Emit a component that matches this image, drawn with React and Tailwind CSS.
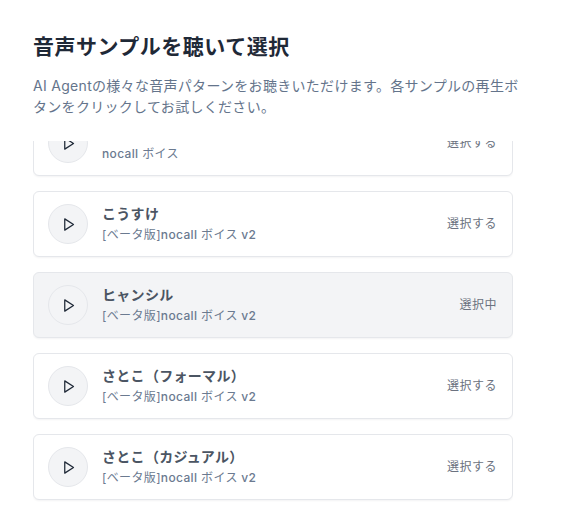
import React from 'react';

const voices = [
    { name: 'あおい', beta: false, action: '選択する' },
    { name: 'こうすけ', beta: true, action: '選択する' },
    { name: 'ヒャンシル', beta: true, action: '選択中', active: true },
    { name: 'さとこ（フォーマル）', beta: true, action: '選択する' },
    { name: 'さとこ（カジュアル）', beta: true, action: '選択する' },
];

const PlayIcon = () => (
    <svg width="15" height="15" viewBox="0 0 24 24" fill="none" stroke="#1f2937" strokeWidth="2" strokeLinecap="round" strokeLinejoin="round">
        <polygon points="6 3 20 12 6 21 6 3" />
    </svg>
);

const VoiceCard = ({ voice }) => (
    <div className={`flex h-[66px] items-center justify-between rounded-md border border-[#e5e7eb] pr-[15px] pl-[14px] shadow-[0_1px_2px_rgba(15,23,42,0.05)] ${voice.active ? 'bg-[#f3f4f6]' : 'bg-white'}`}>
        <div className="flex items-center gap-[14px]">
            <button className="flex h-10 w-10 items-center justify-center rounded-full border border-[#e5e7eb] bg-[#f3f4f6]">
                <PlayIcon />
            </button>
            <div>
                <p className="text-sm leading-[18px] font-semibold tracking-[0.3px] text-[#4b5563]">{voice.name}</p>
                <p className="mt-[2px] text-xs leading-[19px] tracking-[0.35px] text-[#6b7a90]">
                    {voice.beta && '[ベータ版]'}<span className="font-medium">nocall</span> ボイス{voice.beta && <span className="font-medium"> v2</span>}
                </p>
            </div>
        </div>
        <span className="text-xs tracking-[0.5px] text-[#6b7280]">{voice.action}</span>
    </div>
);

export default function App() {
    return (
        <div className="h-[530px] w-[562px] overflow-hidden bg-white px-[33px] pt-[33px] font-['Inter','Noto_Sans_CJK_JP',sans-serif]">
            <h2 className="text-[21px] leading-[28px] font-semibold tracking-[0.5px] text-[#1f2937]">音声サンプルを聴いて選択</h2>
            <p className="mt-[14px] w-[490px] text-sm leading-[21px] tracking-[0.3px] text-[#64748b]">
                AI Agentの様々な音声パターンをお聴きいただけます。各サンプルの再生ボタンをクリックしてお試しください。
            </p>
            <div className="mt-[24px] h-[368px] w-[480px] overflow-hidden">
                <div className="-mt-[31px] flex flex-col gap-[15px]">
                    {voices.map((voice) => (
                        <VoiceCard key={voice.name} voice={voice} />
                    ))}
                </div>
            </div>
        </div>
    );
}
